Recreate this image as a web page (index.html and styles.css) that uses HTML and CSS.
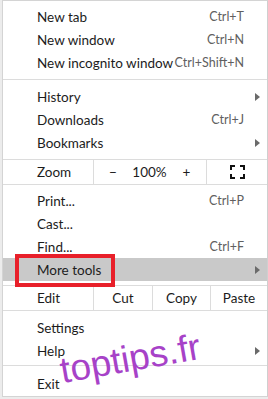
FILE: index.html
```html
<!DOCTYPE html>
<html lang="en">
<head>
  <meta charset="UTF-8" />
  <meta name="viewport" content="width=device-width, initial-scale=1.0"/>
  <title>Chrome menu</title>
  <link rel="stylesheet" href="styles.css">
</head>
<body>
  <div class="menu">
    <div class="item"><span>New tab</span><span class="key">Ctrl+T</span></div>
    <div class="item"><span>New window</span><span class="key">Ctrl+N</span></div>
    <div class="item"><span>New incognito window</span><span class="key">Ctrl+Shift+N</span></div>
    <div class="sep"></div>
    <div class="item"><span>History</span><span class="arrow"></span></div>
    <div class="item"><span>Downloads</span><span class="key">Ctrl+J</span></div>
    <div class="item"><span>Bookmarks</span><span class="arrow"></span></div>

    <div class="zoom-row">
      <div class="cell label">Zoom</div>
      <div class="cell zoom-ctrl">
        <span>&minus;</span>
        <span>100%</span>
        <span>+</span>
      </div>
      <div class="cell fullscreen">
        <svg width="15" height="14" viewBox="0 0 15 14">
          <!-- corner brackets -->
          <path d="M1 5V1H5M10 1H14V5M14 9V13H10M5 13H1V9" fill="none" stroke="#111" stroke-width="2"/>
        </svg>
      </div>
    </div>

    <div class="item"><span>Print...</span><span class="key">Ctrl+P</span></div>
    <div class="item"><span>Cast...</span></div>
    <div class="item"><span>Find...</span><span class="key">Ctrl+F</span></div>
    <div class="item active"><span>More tools</span><span class="arrow"></span></div>

    <div class="edit-row">
      <div class="cell label">Edit</div>
      <div class="cell">Cut</div>
      <div class="cell">Copy</div>
      <div class="cell">Paste</div>
    </div>

    <div class="item"><span>Settings</span></div>
    <div class="item"><span>Help</span><span class="arrow"></span></div>
    <div class="sep last"></div>
    <div class="item"><span>Exit</span></div>
  </div>

  <div class="highlight-box"></div>
  <div class="watermark">toptips.fr</div>
</body>
</html>
```

FILE: styles.css
```css
body {
  margin: 0;
  background: #ececec;
  font-family: Lato, "Noto Sans", sans-serif;
  font-size: 13.5px;
  color: #1c1c1c;
  width: 268px;
  height: 399px;
  overflow: hidden;
  position: relative;
  white-space: nowrap;
}

.menu {
  box-sizing: border-box;
  width: 266px;
  margin-left: 2px;
  padding: 4px 0 1px;
  background: #fff;
  border: 1px solid #d4d4d4;
  border-right-color: #cfcfcf;
}

.item {
  height: 23px;
  display: flex;
  align-items: center;
  padding: 0 7px 0 34px;
}

.item > span:first-child {
  flex: 1;
}

.key {
  color: #606060;
  margin-right: 16px;
  font-size: 12.5px;
}

.arrow {
  width: 0;
  height: 0;
  border-top: 4px solid transparent;
  border-bottom: 4px solid transparent;
  border-left: 5px solid #6a6a6a;
}

.item.active {
  background: #c9c9c9;
}

.sep {
  height: 1px;
  background: #dcdcdc;
  margin: 5px 0;
}

.sep.last {
  margin: 3px 0 6px;
}

.zoom-row, .edit-row {
  display: grid;
  height: 24px;
  border-top: 1px solid #dcdcdc;
  border-bottom: 1px solid #dcdcdc;
  margin: 5px 0 4px;
}

.zoom-row {
  grid-template-columns: 90px 113px 1fr;
}

.edit-row {
  grid-template-columns: 90px 59px 58px 1fr;
  margin: 4px 0 5px;
}

.cell {
  box-sizing: border-box;
  display: flex;
  align-items: center;
  justify-content: center;
  border-left: 1px solid #dcdcdc;
}

.cell.label {
  justify-content: flex-start;
  padding-left: 34px;
  border-left: none;
}

.zoom-ctrl {
  display: grid;
  grid-template-columns: 36px 37px 37px;
  justify-items: center;
  align-items: center;
}

.fullscreen svg {
  display: block;
}

.highlight-box {
  position: absolute;
  left: 15px;
  top: 254px;
  width: 100px;
  height: 33px;
  box-sizing: border-box;
  border: 4px solid #e8202a;
}

.watermark {
  position: absolute;
  left: 64px;
  top: 350px;
  font-family: "Liberation Sans", sans-serif;
  font-size: 37px;
  color: #a742c8;
  transform: rotate(-10deg);
  transform-origin: left bottom;
}
```
